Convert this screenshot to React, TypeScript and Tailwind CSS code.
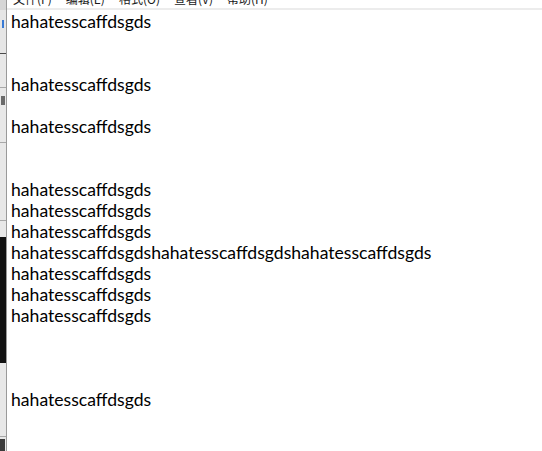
import React from 'react';

const lines = [
  'hahatesscaffdsgds',
  '',
  '',
  'hahatesscaffdsgds',
  '',
  'hahatesscaffdsgds',
  '',
  '',
  'hahatesscaffdsgds',
  'hahatesscaffdsgds',
  'hahatesscaffdsgds',
  'hahatesscaffdsgdshahatesscaffdsgdshahatesscaffdsgds',
  'hahatesscaffdsgds',
  'hahatesscaffdsgds',
  'hahatesscaffdsgds',
  '',
  '',
  '',
  'hahatesscaffdsgds',
  '',
];

const menus = ['文件(F)', '编辑(E)', '格式(O)', '查看(V)', '帮助(H)'];

const SideStrip = () => (
  <div className="w-[7px] h-full flex flex-col shrink-0 border-r border-[#9a9a9a]">
    <div className="h-[10px] bg-[#d6d6d6]" />
    <div className="h-[43px] bg-[#e6e6e6] flex flex-col pt-[10px] pl-[2px]">
      <div className="w-[2px] h-[8px] bg-[#3a7bd5]" />
    </div>
    <div className="h-px bg-[#4a4a4a]" />
    <div className="h-[33px] bg-[#e8e8e8]" />
    <div className="h-px bg-[#a8a8a8]" />
    <div className="h-[54px] bg-[#e8e8e8] flex flex-col pt-[8px] pl-[1px]">
      <div className="w-[4px] h-[9px] bg-[#6a6a6a]" />
    </div>
    <div className="h-px bg-[#a8a8a8]" />
    <div className="h-[77px] bg-[#e8e8e8]" />
    <div className="h-px bg-[#a8a8a8]" />
    <div className="h-[16px] bg-[#e8e8e8]" />
    <div className="h-[126px] bg-[#121212]" />
    <div className="h-[73px] bg-[#e8e8e8]" />
    <div className="h-px bg-[#a8a8a8]" />
    <div className="flex-1 bg-[#e8e8e8] flex flex-col pt-[2px]">
      <div className="w-[5px] h-[12px] bg-[#3a3a3a]" />
    </div>
  </div>
);

export default function App() {
  return (
    <div className="w-[542px] h-[451px] overflow-hidden flex bg-white">
      <SideStrip />
      <div className="flex-1 flex flex-col min-w-0">
        <div className="h-[8px] overflow-hidden bg-white">
          <div className="-mt-[9px] flex gap-[14px] pl-[6px] text-[12px] leading-[16px] text-[#1a1a1a] font-['Noto_Sans_CJK_SC',sans-serif] whitespace-nowrap">
            {menus.map((m) => (
              <span key={m}>{m}</span>
            ))}
          </div>
        </div>
        <div className="h-[2px] bg-[#ececec]" />
        <div className="flex-1 pl-[4px] pt-px font-['Lato',sans-serif] text-[17.6px] leading-[21px] text-black whitespace-pre">
          {lines.map((l, i) => (
            <div key={i} className="h-[21px]">
              {l}
            </div>
          ))}
        </div>
      </div>
    </div>
  );
}
